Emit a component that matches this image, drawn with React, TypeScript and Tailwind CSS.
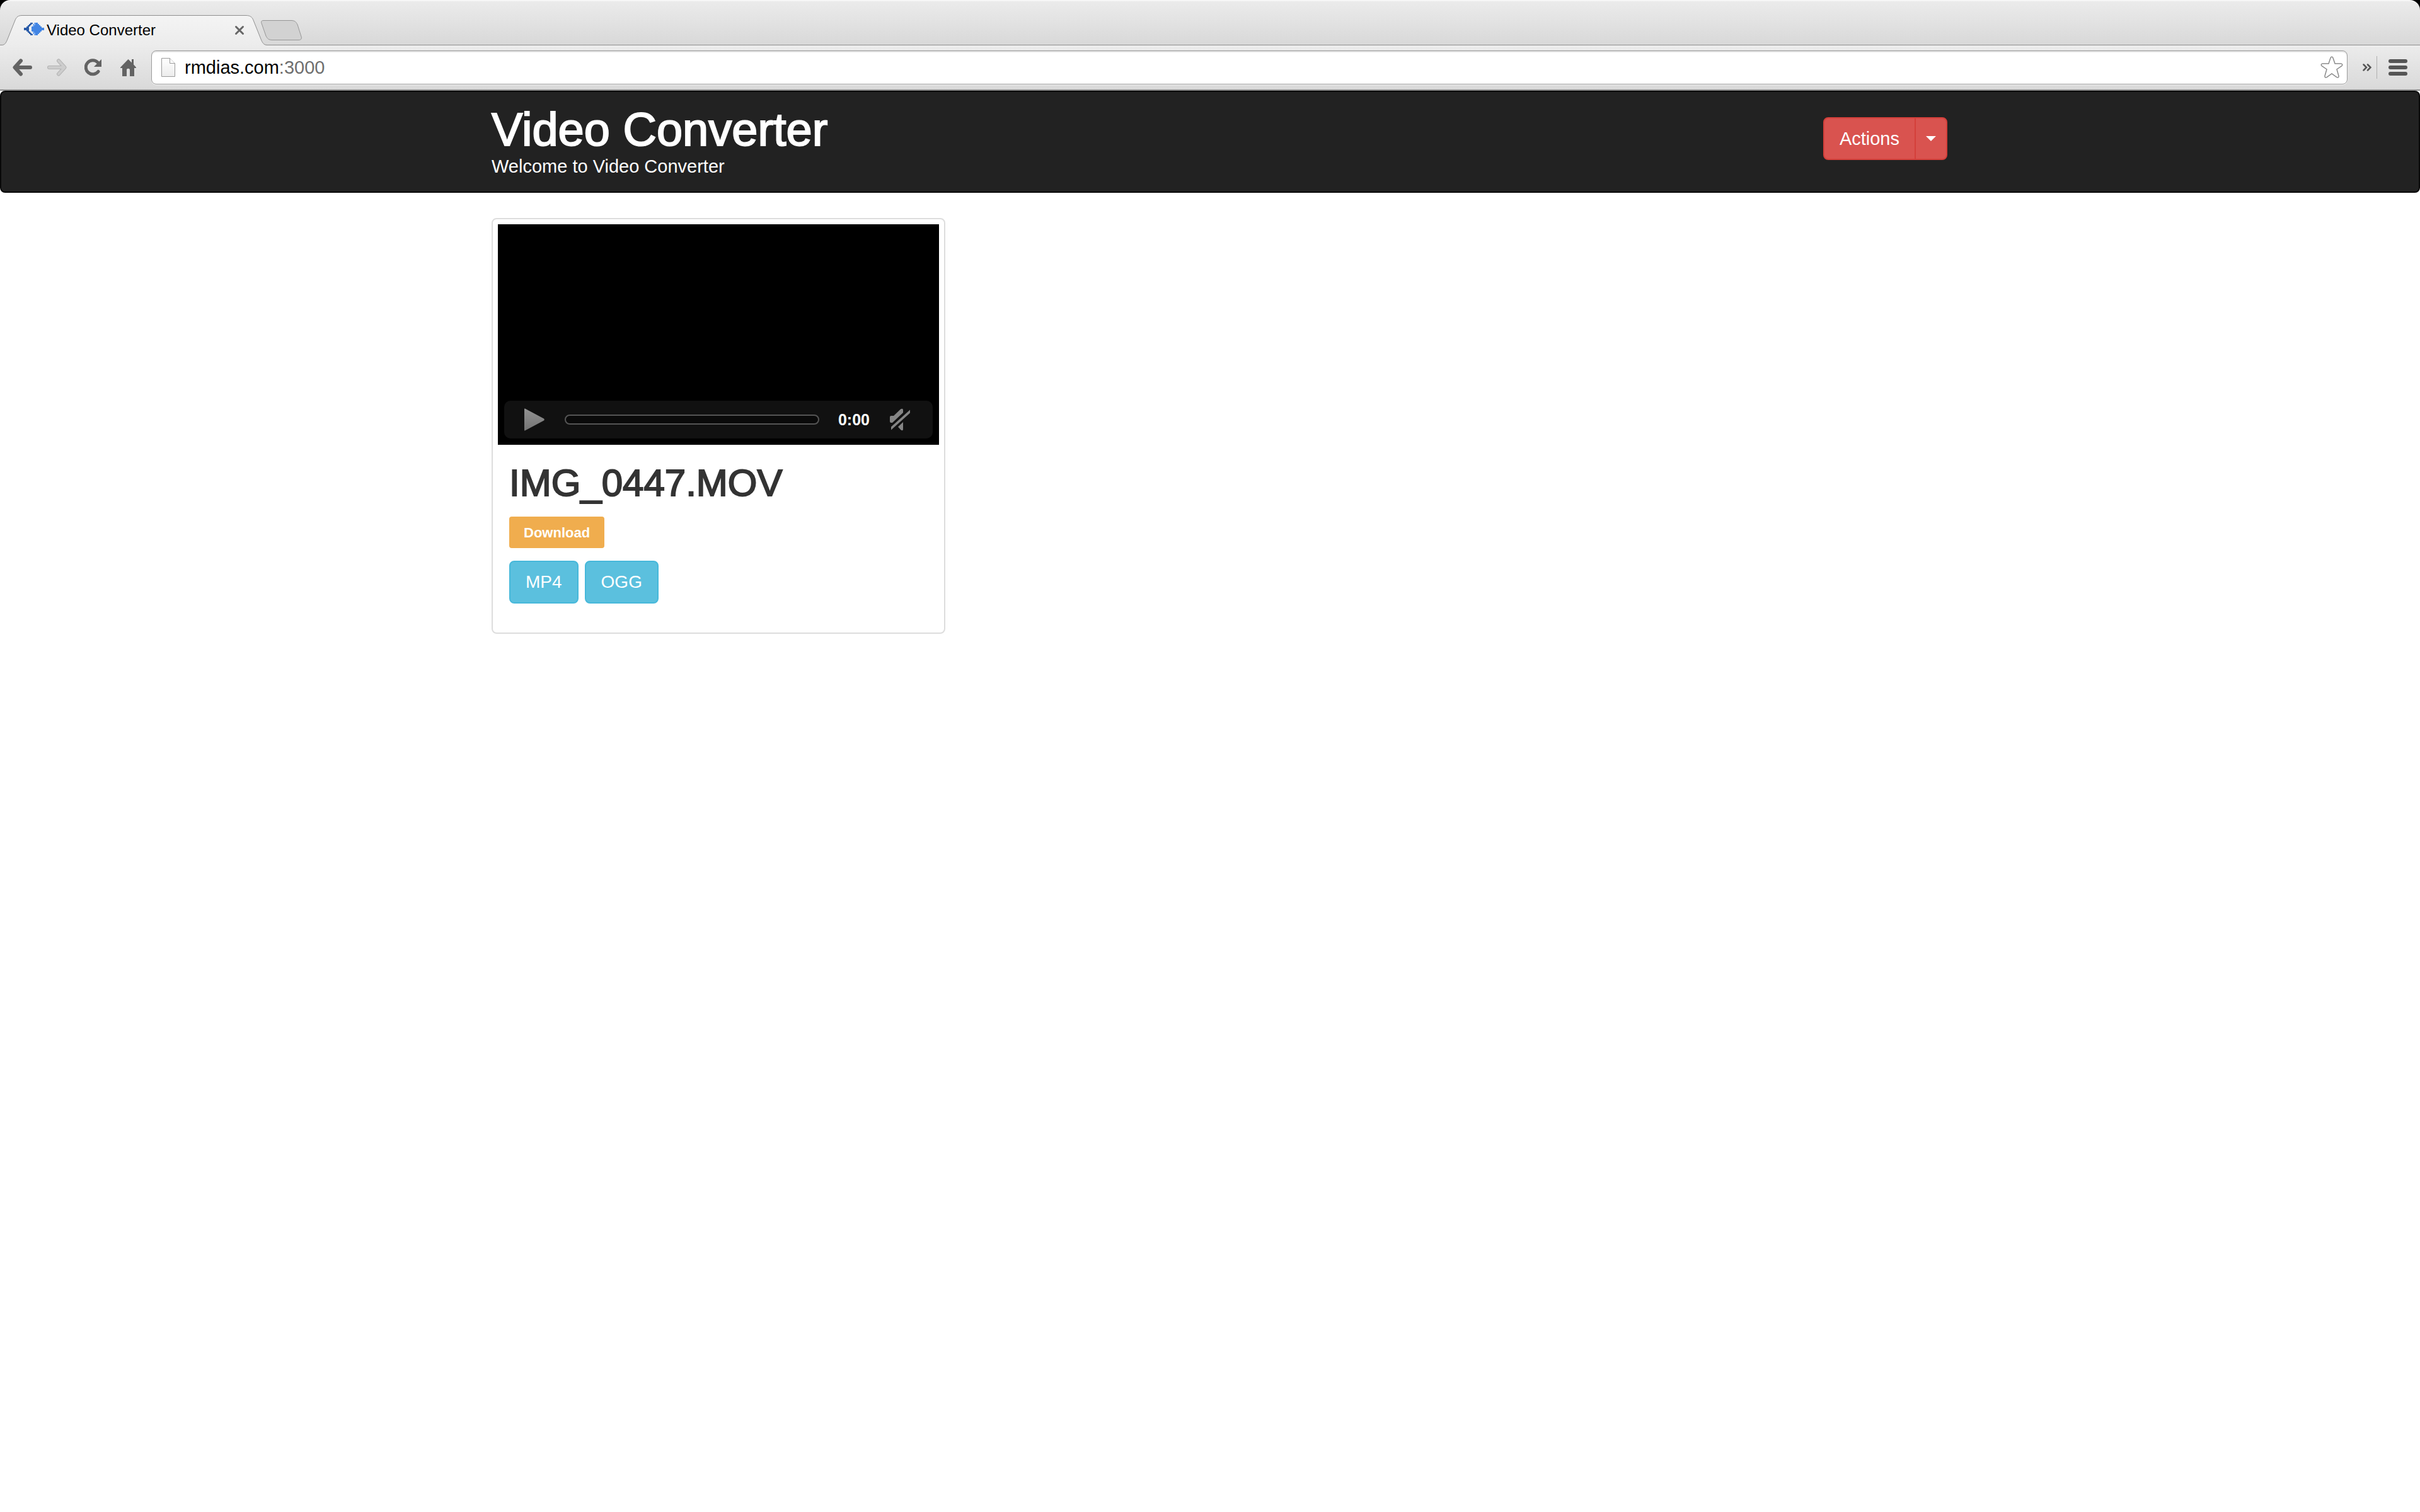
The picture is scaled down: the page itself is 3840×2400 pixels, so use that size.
import React from "react";

function TabStrip() {
  return (
    <div className="flex h-18 items-end overflow-hidden rounded-t-2xl border-t-2 border-[#f6f6f6] bg-linear-to-b from-[#ebebeb] to-[#d8d8d8]">
      <div className="relative h-12 w-[424px] shrink-0">
        <svg className="absolute inset-0" width="424" height="48" viewBox="0 0 424 48" fill="none" aria-hidden="true">
          <defs>
            <linearGradient id="tabFill" x1="0" y1="0" x2="0" y2="1">
              <stop offset="0" stopColor="#f4f4f4" />
              <stop offset="1" stopColor="#ececec" />
            </linearGradient>
          </defs>
          <path d="M0 48 H3 C8 48 10 43 12 38 L24 8 C26 3 29 0.5 35 0.5 H390 C397 0.5 400 3 402 8 L414 38 C416 43 418 47.5 424 48 Z" fill="url(#tabFill)" />
          <path d="M0 47.5 H3 C8 47.5 10 43 12 38 L24 8 C26 3 29 0.5 35 0.5 H390 C397 0.5 400 3 402 8 L414 38 C416 43 418 47.5 424 47.5" stroke="#8f8f8f" />
        </svg>
        <div className="relative flex h-full items-center pr-9 pl-[38px]">
          <svg className="mr-1 -mt-1" width="32" height="20" viewBox="0 0 32 20" shapeRendering="crispEdges" aria-hidden="true">
            <path d="M0 8 H4 V6 H6 V4 H8 V2 H10 V0 H14 V2 H12 V4 H10 V6 H8 V14 H10 V16 H12 V18 H14 V20 H10 V18 H8 V16 H6 V14 H4 V12 H0 Z" fill="#2a5ba8" />
            <path d="M16 0 H22 V2 H24 V4 H26 V6 H28 V8 H32 V12 H28 V14 H26 V16 H24 V18 H22 V20 H16 V18 H14 V14 H12 V6 H14 V2 H16 Z" fill="#4285e4" />
            <path d="M16 0 H18 V4 H16 V6 H14 V2 H16 Z M16 20 H18 V16 H16 V14 H14 V18 H16 Z" fill="#7dadf0" />
          </svg>
          <span className="grow text-2xl leading-7 text-black">Video Converter</span>
          <button type="button" aria-label="Close tab" className="block">
            <svg width="16" height="16" viewBox="0 0 16 16" aria-hidden="true">
              <path d="M2.5 2.5 L13.5 13.5 M13.5 2.5 L2.5 13.5" stroke="#666" strokeWidth="3" strokeLinecap="round" />
            </svg>
          </button>
        </div>
      </div>
      <div className="flex h-full grow items-end border-b border-[#8f8f8f] pb-1.5">
        <button type="button" aria-label="New tab" className="-ml-3 block">
          <svg width="68" height="34" viewBox="0 0 68 34" aria-hidden="true">
            <path d="M6 1.5 H50 C56 1.5 58 4 60 8 L66 27 C67 30 66 32.5 62 32.5 H20 C14 32.5 12 30 10 26 L3 6 C2 3 3 1.5 6 1.5 Z" fill="#d2d2d2" stroke="#969696" />
          </svg>
        </button>
      </div>
    </div>
  );
}

function Toolbar() {
  return (
    <div className="flex h-18 items-center border-b-2 border-[#8c8c8c] bg-linear-to-b from-[#ececec] to-[#d9d9d9] pr-5 pl-5">
      <button type="button" aria-label="Back" className="block">
        <svg width="31" height="28" viewBox="0 0 31 28" fill="none" aria-hidden="true">
          <path d="M28 14 H4 M13 3.5 L3.5 14 L13 24.5" stroke="#636363" strokeWidth="6" strokeLinecap="round" strokeLinejoin="round" />
        </svg>
      </button>
      <button type="button" aria-label="Forward" className="ml-6 block">
        <svg width="31" height="28" viewBox="0 0 31 28" fill="none" aria-hidden="true">
          <path d="M3 14 H27 M18 3.5 L27.5 14 L18 24.5" stroke="#b4b4b4" strokeWidth="6" strokeLinecap="round" strokeLinejoin="round" />
          <path d="M3 14 H27 M18 3.5 L27.5 14 L18 24.5" stroke="#cdcdcd" strokeWidth="4" strokeLinecap="round" strokeLinejoin="round" />
        </svg>
      </button>
      <button type="button" aria-label="Reload" className="ml-7 block">
        <svg width="28" height="28" viewBox="0 0 28 28" fill="none" aria-hidden="true">
          <path d="M22 20.5 A11 11 0 1 1 21 6" stroke="#636363" strokeWidth="5" strokeLinecap="round" />
          <path d="M27 1 V13 H15 Z" fill="#636363" />
        </svg>
      </button>
      <button type="button" aria-label="Home" className="ml-7 block">
        <svg width="28" height="28" viewBox="0 0 28 28" aria-hidden="true">
          <path d="M13.5 1 L19 6.5 V1 H22 V9.5 L26 14 V15 H23 V28 H16 V18 C16 15 11 15 11 18 V28 H4 V15 H1 V14 Z" fill="#636363" />
        </svg>
      </button>
      <div className="ml-[22px] flex h-[54px] grow items-center rounded-lg border border-[#9c9c9c] bg-white pr-1.5 pl-3.5 shadow-[inset_0_2px_1px_#e4e4e4,0_1px_0_#f2f2f2]">
        <svg className="shrink-0" width="24" height="32" viewBox="0 0 24 32" aria-hidden="true">
          <defs>
            <linearGradient id="pageFill" x1="0" y1="0" x2="0" y2="1">
              <stop offset="0" stopColor="#fff" />
              <stop offset="1" stopColor="#ececec" />
            </linearGradient>
          </defs>
          <path d="M1.5 1.5 H14.5 L22.5 9.5 V30.5 H1.5 Z" fill="url(#pageFill)" stroke="#9a9a9a" />
          <path d="M14.5 1.5 V9.5 H22.5" fill="#fff" stroke="#9a9a9a" />
        </svg>
        <div className="ml-3.5 flex grow items-center text-[29px] leading-9">
          <input type="text" aria-label="Address" defaultValue="rmdias.com" className="block h-9 field-sizing-content text-black outline-none" />
          <span className="text-[#6f6f6f]">:3000</span>
        </div>
        <button type="button" aria-label="Bookmark this page" className="block">
          <svg width="36" height="36" viewBox="0 0 36 36" aria-hidden="true">
            <path d="M16 3 C17 0.8 19 0.8 20 3 L23 12 H32.5 C35 12.3 35.6 14.3 33.5 15.8 L26 21 L29 31.5 C29.5 33.8 27.6 34.8 25.6 33.4 L18 28 L10.4 33.4 C8.4 34.8 6.5 33.8 7 31.5 L10 21 L2.5 15.8 C0.4 14.3 1 12.3 3.5 12 H13 Z" fill="#fff" stroke="#8a8a8a" strokeWidth="1.5" />
          </svg>
        </button>
      </div>
      <button type="button" aria-label="More extensions" className="ml-6 block">
        <svg width="14" height="12" viewBox="0 0 14 12" fill="none" aria-hidden="true">
          <path d="M1.5 1.5 L6 6 L1.5 10.5 M8 1.5 L12.5 6 L8 10.5" stroke="#555" strokeWidth="2.5" strokeLinecap="round" />
        </svg>
      </button>
      <div className="ml-2 h-9 w-px bg-[#b0b0b0]" />
      <button type="button" aria-label="Menu" className="ml-[18px] block">
        <svg width="30" height="28" viewBox="0 0 30 28" fill="#555" aria-hidden="true">
          <rect y="1" width="30" height="6" rx="3" />
          <rect y="11" width="30" height="6" rx="3" />
          <rect y="21" width="30" height="6" rx="3" />
        </svg>
      </button>
    </div>
  );
}

function Navbar() {
  return (
    <header className="rounded-lg border-2 border-[#080808] bg-[#222]">
      <div className="mx-auto flex h-[158px] max-w-[2340px] items-start justify-between pl-[30px]">
        <div className="pt-5 text-white">
          <h1 className="text-[74px] leading-20 [-webkit-text-stroke:2px_#fff]">Video Converter</h1>
          <p className="text-[29px] leading-9">Welcome to Video Converter</p>
        </div>
        <div className="mt-10 flex text-[29px] leading-10 text-white">
          <button type="button" className="rounded-l-lg border-2 border-[#d43f3a] bg-[#d9534f] px-6 py-3">Actions</button>
          <button type="button" aria-label="Toggle actions menu" className="-ml-0.5 rounded-r-lg border-2 border-[#d43f3a] bg-[#d9534f] px-4">
            <svg width="16" height="8" viewBox="0 0 16 8" aria-hidden="true">
              <path d="M0 0 H16 L8 8 Z" fill="#fff" />
            </svg>
          </button>
        </div>
      </div>
    </header>
  );
}

function VideoPlayer() {
  return (
    <div className="flex h-[350px] items-end bg-black p-2.5">
      <div className="flex h-15 grow items-center rounded-[10px] bg-[#111] pr-9 pl-8">
        <button type="button" aria-label="Play" className="block">
          <svg width="32" height="36" viewBox="0 0 32 36" aria-hidden="true">
            <defs>
              <linearGradient id="playFill" x1="0" y1="0" x2="0" y2="1">
                <stop offset="0" stopColor="#929292" />
                <stop offset="1" stopColor="#747474" />
              </linearGradient>
            </defs>
            <path d="M0 1 Q0 0 1.5 0.8 L31 16.5 Q32.5 18 31 19.5 L1.5 35.2 Q0 36 0 35 Z" fill="url(#playFill)" />
          </svg>
        </button>
        <div className="ml-8 h-4 grow rounded-lg border-2 border-[#555] bg-[#0a0a0a]" role="progressbar" aria-label="Playback position" />
        <span className="ml-[30px] text-[25px] leading-7 font-bold text-white">0:00</span>
        <button type="button" aria-label="Unmute" className="ml-8 block">
          <svg width="32" height="36" viewBox="0 0 32 36" aria-hidden="true">
            <path d="M0 14 Q0 12 2 12 H6 L17 1.5 Q21 -0.5 21 3 V7 L4 23 H2 Q0 23 0 21 Z" fill="#858585" />
            <path d="M21 22 V33 Q21 37 17 34 L13 29.5 Z" fill="#858585" />
            <path d="M32 2.5 V7.5 L2 34.5 V29.5 Z" fill="#858585" />
          </svg>
        </button>
      </div>
    </div>
  );
}

function VideoCard() {
  return (
    <article className="w-[720px] rounded-lg border-2 border-[#ddd] bg-white p-2">
      <VideoPlayer />
      <div className="px-[18px] pt-7 pb-[38px]">
        <h2 className="text-[60px] leading-[66px] text-[#333] [-webkit-text-stroke:2px_#333]">IMG_0447.MOV</h2>
        <a href="#download" className="mt-5 flex h-[50px] w-fit items-center rounded-sm bg-[#f0ad4e] px-[23px] text-[22px] font-bold text-white">Download</a>
        <div className="mt-5 flex gap-2.5 text-[28px] leading-10 text-white">
          <button type="button" className="rounded-lg border-2 border-[#46b8da] bg-[#5bc0de] px-6 py-3">MP4</button>
          <button type="button" className="rounded-lg border-2 border-[#46b8da] bg-[#5bc0de] px-6 py-3">OGG</button>
        </div>
      </div>
    </article>
  );
}

export default function App() {
  return (
    <div className="min-h-screen bg-white font-['Liberation_Sans',Arial,sans-serif]">
      <div className="bg-black">
        <TabStrip />
        <Toolbar />
      </div>
      <Navbar />
      <main className="mx-auto max-w-[2340px] px-[30px] pt-10">
        <VideoCard />
      </main>
    </div>
  );
}
